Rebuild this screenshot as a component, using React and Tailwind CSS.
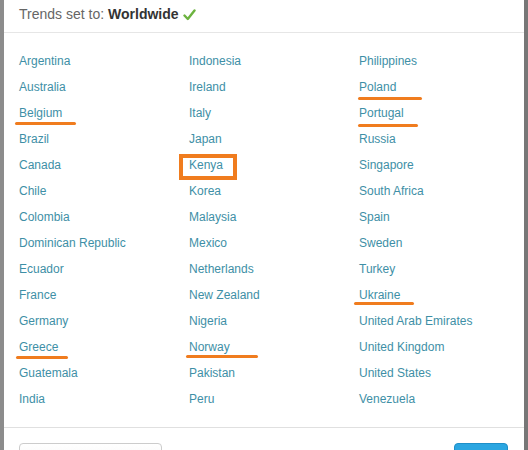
import React from "react";

const columns = [
  ["Argentina", "Australia", "Belgium", "Brazil", "Canada", "Chile", "Colombia", "Dominican Republic", "Ecuador", "France", "Germany", "Greece", "Guatemala", "India"],
  ["Indonesia", "Ireland", "Italy", "Japan", "Kenya", "Korea", "Malaysia", "Mexico", "Netherlands", "New Zealand", "Nigeria", "Norway", "Pakistan", "Peru"],
  ["Philippines", "Poland", "Portugal", "Russia", "Singapore", "South Africa", "Spain", "Sweden", "Turkey", "Ukraine", "United Arab Emirates", "United Kingdom", "United States", "Venezuela"],
];

// hand-drawn marks over some of the names
const underlined = {
  Belgium: "left-[-4px] w-[61px] top-[15px]",
  Greece: "left-[-3px] w-[52px] top-[15px]",
  Norway: "left-[-3px] w-[72px] top-[14px]",
  Poland: "left-[-1px] w-[64px] top-[16px]",
  Portugal: "left-[-1px] w-[60px] top-[17px]",
  Ukraine: "left-[-5px] w-[60px] top-[13px]",
};

function Country({ name }) {
  return (
    <div className="h-[26px] flex items-center">
      <span className="relative text-[12px] text-[#3e8fa6] leading-none">
        {name}
        {underlined[name] && (
          <span className={`absolute h-[3px] rounded-full bg-[#f07c1e] ${underlined[name]}`} />
        )}
        {name === "Kenya" && (
          <span className="absolute left-[-10px] right-[-14px] top-[-5px] h-[26px] border-4 border-[#f07c1e]" />
        )}
      </span>
    </div>
  );
}

export default function App() {
  return (
    <div className="w-[528px] h-[450px] overflow-hidden bg-[#808080] flex" style={{ fontFamily: '"Liberation Sans", Arial, sans-serif' }}>
      <div className="w-[4px] shrink-0 bg-[#8c8c8c]" />
      <div className="w-[520px] shrink-0 bg-white flex flex-col">
        <div className="h-[33px] shrink-0 border-b border-[#e6e6e6] flex items-center px-[15px] pb-[4px]">
          <span className="text-[14px] text-[#666]">Trends set to:</span>
          <span className="text-[14px] font-bold text-[#333] ml-[4px]">Worldwide</span>
          <svg width="13" height="12" viewBox="0 0 13 12" className="ml-[4px] mt-[2px]">
            <path d="M1.5 6.5 L4.8 10 L11.5 1.5" fill="none" stroke="#6cb33f" strokeWidth="2.4" strokeLinecap="round" strokeLinejoin="round" />
          </svg>
        </div>
        <div className="shrink-0 grid grid-cols-[170px_170px_150px] pl-[15px] pt-[15px] pb-[15px] border-b border-[#e0e0e0]">
          {columns.map((col, i) => (
            <div key={i} className="flex flex-col">
              {col.map((c) => (
                <Country key={c} name={c} />
              ))}
            </div>
          ))}
        </div>
        <div className="shrink-0 flex justify-between px-[15px] pt-[15px] pr-[16px]">
          <div className="w-[143px] h-[30px] rounded-[4px] border border-[#ccc] bg-gradient-to-b from-white to-[#f2f2f2]" />
          <div className="w-[54px] h-[30px] rounded-[4px] bg-[#2ba6e1] border border-[#1f8fc8]" />
        </div>
      </div>
      <div className="flex-1 bg-[#777]" />
    </div>
  );
}
